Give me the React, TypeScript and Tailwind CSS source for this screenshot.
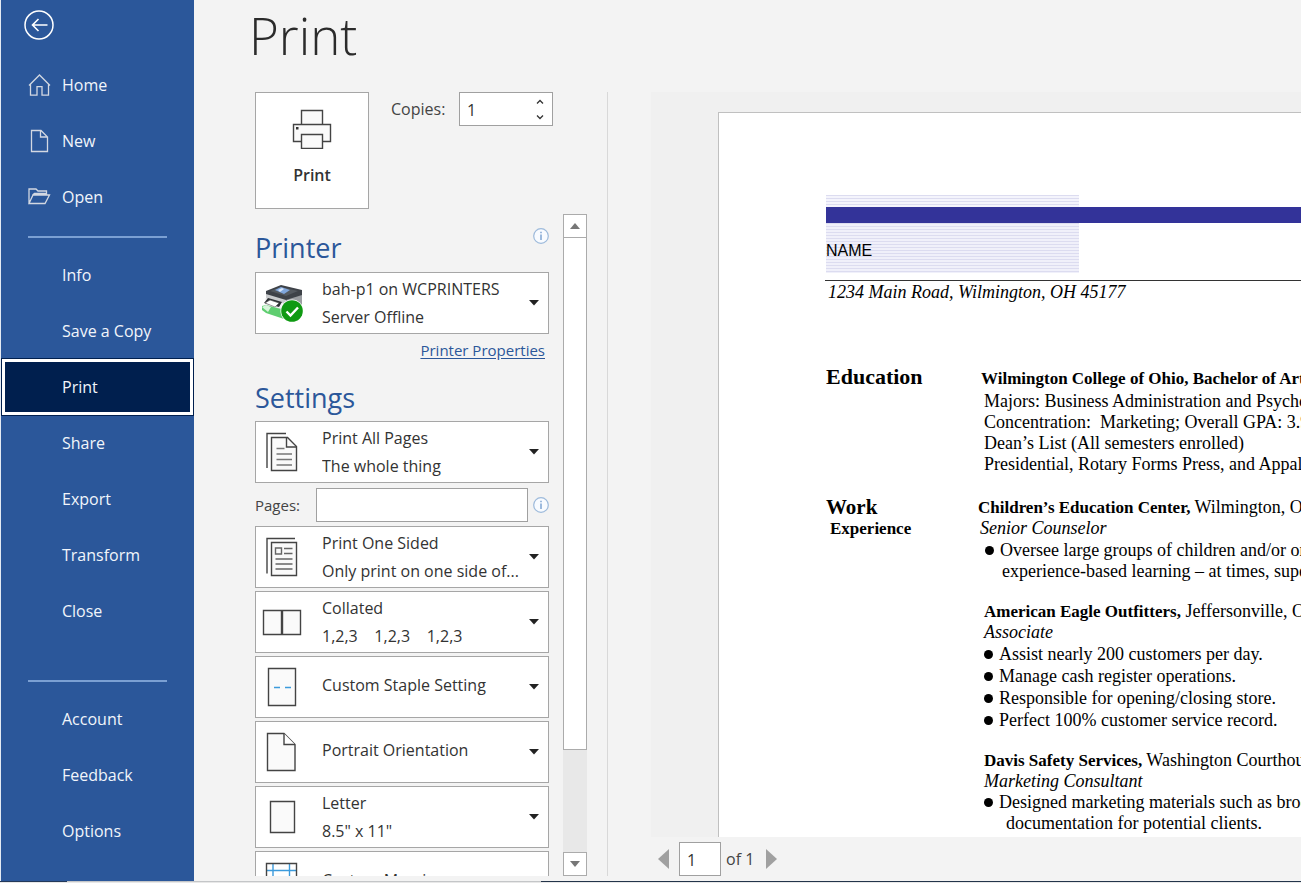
import type { ReactNode } from "react";

const uiFont = "font-['Open_Sans','Noto_Sans',sans-serif]";

/* ---------- icons ---------- */

function BackIcon() {
  return (
    <svg width="30" height="30" viewBox="0 0 30 30" fill="none" stroke="#fff" aria-hidden="true">
      <circle cx="15" cy="15" r="14" strokeWidth="1.5" />
      <path d="M23.5 15H8M14.500 9l-6 6 6 6" strokeWidth="1.600" />
    </svg>
  );
}

function HomeIcon() {
  return (
    <svg width="24" height="24" viewBox="0 0 24 24" fill="none" stroke="#d3d8e2" strokeWidth="1.300" aria-hidden="true">
      <path d="M2 12.500 12.500 2 23 12.500M3.500 11.200v11h6.500v-8.500h5v8.500h6.500v-11" />
    </svg>
  );
}

function NewIcon() {
  return (
    <svg width="24" height="24" viewBox="0 0 24 24" fill="none" stroke="#d3d8e2" strokeWidth="1.300" aria-hidden="true">
      <path d="M4.500 1.500H14l6.500 6.500v14.500h-16zM13.500 1.500v6.500h7" />
    </svg>
  );
}

function OpenIcon() {
  return (
    <svg width="24" height="24" viewBox="0 0 24 24" fill="none" stroke="#d3d8e2" strokeWidth="1.300" aria-hidden="true">
      <path d="M2 18.500V4h7l2 2h8.500v4M2 18.500 6 10h16.500l-4.500 8.500zM5.500 10l2-1.500h12" />
    </svg>
  );
}

function BigPrinterIcon() {
  return (
    <svg width="40" height="40" viewBox="0 0 40 40" fill="#fafafa" stroke="#444" strokeWidth="1.400" aria-hidden="true">
      <path d="M9.500 15V1.500h21V15" />
      <path d="M1.500 15.500h37v17h-37z" />
      <path d="M9.500 25.500h21v14h-21z" />
      <path d="M4 18h2.500v2.500H4z" fill="#333" stroke="none" />
    </svg>
  );
}

function DeviceIcon() {
  return (
    <svg width="44" height="40" viewBox="0 0 44 40" aria-hidden="true">
      <path d="M4 10 24 15v19L4 27z" fill="#c9cbcd" />
      <path d="M24 15l16-7v17l-16 9z" fill="#9a9da1" />
      <path d="M4 8 19 2l21 5v5l-16 5L4 11z" fill="#3e4248" />
      <path d="M8 8 19 4l17 4-12 5z" fill="#54595f" />
      <path d="M13 7l6-3 9 3-6 4z" fill="#7fa6dc" />
      <path d="M16 7l4-2 2 1-4 3z" fill="#d7e6fa" />
      <path d="M3 15l18 5v6L3 22z" fill="#f4f4f4" />
      <path d="M2 20l4-5 14 4-3 5z" fill="#2d3034" />
      <path d="M3 20l5-3 9 3-4 4z" fill="#fff" stroke="#555" strokeWidth=".6" />
      <path d="M0 23l4-1 18 5v9L4 30l-4-3z" fill="#5fce70" />
      <path d="M0 24l4-2 5 2-3 5z" fill="#d9f5dc" />
      <circle cx="30" cy="28" r="11.500" fill="#fff" />
      <circle cx="30" cy="28" r="10.800" fill="#0f9a12" />
      <path d="M24.500 28.500l4 4 7.500-8" fill="none" stroke="#fff" strokeWidth="2.400" />
    </svg>
  );
}

function PagesIcon() {
  return (
    <svg width="40" height="40" viewBox="0 0 40 40" fill="none" stroke="#444" strokeWidth="1.400" aria-hidden="true">
      <path d="M5 36V1.500h19" />
      <path d="M9.500 5.500h16l9 9v24h-25z" fill="#fafafa" />
      <path d="M24.500 5.500v9.500h10" />
      <path d="M14.500 16.500h8M14.500 22h15.500M14.500 27.500h15.500M14.500 33h15.500" stroke="#777" />
    </svg>
  );
}

function OneSidedIcon() {
  return (
    <svg width="40" height="40" viewBox="0 0 40 40" fill="none" stroke="#444" strokeWidth="1.400" aria-hidden="true">
      <path d="M5 36.500V1.500h28" />
      <path d="M9.500 5.500h25v33h-25z" fill="#fafafa" />
      <path d="M13.500 11h6v6h-6zM22 11.500h8.500M22 16.500h8.500M13.500 22h17M13.500 27h17M13.500 32h17" stroke="#666" />
    </svg>
  );
}

function CollatedIcon() {
  return (
    <svg width="40" height="40" viewBox="0 0 40 40" fill="#fafafa" stroke="#444" strokeWidth="1.400" aria-hidden="true">
      <path d="M1.500 8.500h18v24h-18zM20.500 8.500h18v24h-18z" />
    </svg>
  );
}

function StapleIcon() {
  return (
    <svg width="40" height="40" viewBox="0 0 40 40" fill="#fafafa" stroke="#444" strokeWidth="1.400" aria-hidden="true">
      <path d="M6.500 1.500h27v37h-27z" />
      <path d="M12 20.500h6M23 20.500h6" stroke="#3c9bdc" strokeWidth="1.500" />
    </svg>
  );
}

function PortraitIcon() {
  return (
    <svg width="40" height="40" viewBox="0 0 40 40" fill="#fafafa" stroke="#444" strokeWidth="1.400" aria-hidden="true">
      <path d="M5.500 1.500H22l11 11v26H5.500z" />
      <path d="M22 1.500v11h11" fill="#fff" />
    </svg>
  );
}

function LetterIcon() {
  return (
    <svg width="40" height="40" viewBox="0 0 40 40" fill="#fafafa" stroke="#444" strokeWidth="1.400" aria-hidden="true">
      <path d="M8.500 4.500h24v31h-24z" />
    </svg>
  );
}

function MarginsIcon() {
  return (
    <svg width="40" height="40" viewBox="0 0 40 40" fill="#fafafa" stroke="#444" strokeWidth="1.400" aria-hidden="true">
      <path d="M11 2v36M27.500 2v36M5 8.500h29M5 32h29" stroke="#3c9bdc" />
      <path d="M4.500 1.500h30v37h-30z" fill="none" />
    </svg>
  );
}

function CaretDown() {
  return (
    <svg width="10" height="6" viewBox="0 0 10 6" aria-hidden="true">
      <path d="M0 0h10L5 5.500z" fill="#222" />
    </svg>
  );
}

function InfoButton({ label }: { label: string }) {
  return (
    <button type="button" aria-label={label} className="flex size-4 items-center justify-center">
      <svg width="16" height="16" viewBox="0 0 16 16" fill="none" aria-hidden="true">
        <circle cx="8" cy="8" r="7.300" stroke="#9dbadb" strokeWidth="1.200" fill="#f8fbff" />
        <path d="M8 6.500v5.500M8 3.800v1.400" stroke="#6290c8" strokeWidth="1.200" />
      </svg>
    </button>
  );
}

/* ---------- sidebar ---------- */

function NavItem({ label, icon, active }: { label: string; icon?: ReactNode; active?: boolean }) {
  return (
    <li>
      <a
        href={"#" + label.toLowerCase().replace(/ /g, "-")}
        aria-current={active ? "page" : undefined}
        className={
          active
            ? "mx-px flex h-14 items-center border-3 border-white bg-[#001f4e] pl-[57px] outline-1 outline-[#001f4e]"
            : "flex h-14 items-center pl-[26px]"
        }
      >
        {!active && <span className="w-[35px] shrink-0">{icon}</span>}
        {label}
      </a>
    </li>
  );
}

function Sidebar() {
  return (
    <nav
      aria-label="File"
      className="flex w-[194px] shrink-0 flex-col border-l border-[#e4eaf3] bg-[#2b579a] text-base text-[#f1f5fb]"
    >
      <div className="flex h-[57px] items-start pt-[10px] pl-[23px]">
        <button type="button" aria-label="Back">
          <BackIcon />
        </button>
      </div>
      <ul>
        <NavItem label="Home" icon={<HomeIcon />} />
        <NavItem label="New" icon={<NewIcon />} />
        <NavItem label="Open" icon={<OpenIcon />} />
      </ul>
      <hr className="mx-[27px] mt-[11px] mb-[9px] border-t-2 border-[#7ba0d3]" />
      <ul>
        <NavItem label="Info" />
        <NavItem label="Save a Copy" />
        <NavItem label="Print" active />
        <NavItem label="Share" />
        <NavItem label="Export" />
        <NavItem label="Transform" />
        <NavItem label="Close" />
      </ul>
      <hr className="mx-[27px] mt-[41px] mb-[9px] border-t-2 border-[#7ba0d3]" />
      <ul>
        <NavItem label="Account" />
        <NavItem label="Feedback" />
        <NavItem label="Options" />
      </ul>
    </nav>
  );
}

/* ---------- settings column ---------- */

function Picker({ icon, title, detail }: { icon: ReactNode; title: string; detail?: string }) {
  return (
    <button
      type="button"
      aria-haspopup="listbox"
      className="flex h-[62px] w-full shrink-0 items-center border border-[#a6a6a6] bg-white pr-[9px] pl-[6px] text-left text-base leading-7 text-[#333]"
    >
      <span className="flex w-[60px] shrink-0">{icon}</span>
      <span className={detail ? "flex min-w-0 flex-1 flex-col" : "flex min-w-0 flex-1 flex-col pb-1"}>
        <span>{title}</span>
        {detail && <span className="truncate whitespace-pre">{detail}</span>}
      </span>
      <CaretDown />
    </button>
  );
}

function ScrollBar() {
  return (
    <div className="flex w-6 shrink-0 flex-col bg-[#e8e8e8]">
      <button
        type="button"
        aria-label="Scroll up"
        className="flex h-6 items-center justify-center border border-[#ababab] bg-white"
      >
        <svg width="10" height="6" viewBox="0 0 10 6" aria-hidden="true">
          <path d="M0 6h10L5 0z" fill="#777" />
        </svg>
      </button>
      <div className="-mt-px flex-[5] border border-[#ababab] bg-white" />
      <div className="flex-1" />
      <button
        type="button"
        aria-label="Scroll down"
        className="flex h-6 items-center justify-center border border-[#ababab] bg-white"
      >
        <svg width="10" height="6" viewBox="0 0 10 6" aria-hidden="true">
          <path d="M0 0h10L5 6z" fill="#777" />
        </svg>
      </button>
    </div>
  );
}

function SettingsColumn() {
  return (
    <section className="mb-[5px] flex w-[353px] shrink-0 flex-col border-r border-[#d8d8d8]">
      <div className="flex items-start">
        <button
          type="button"
          className="flex h-[117px] w-[114px] flex-col items-center border border-[#a6a6a6] bg-white pt-4 text-base font-semibold text-[#333]"
        >
          <BigPrinterIcon />
          <span className="mt-[14px]">Print</span>
        </button>
        <label htmlFor="copies" className="ml-[22px] w-[68px] text-base leading-[34px] text-[#444]">
          Copies:
        </label>
        <div className="flex h-[34px] w-[94px] border border-[#a0a0a0] bg-white">
          <input
            id="copies"
            type="text"
            inputMode="numeric"
            defaultValue="1"
            className="min-w-0 flex-1 pt-[2px] pl-[7px] text-base text-[#333] outline-none"
          />
          <div className="flex w-6 flex-col">
            <button type="button" aria-label="More copies" className="flex flex-1 items-center justify-center">
              <svg width="8" height="5" viewBox="0 0 8 5" fill="none" stroke="#333" strokeWidth="1.300" aria-hidden="true">
                <path d="M1 4.500l3-3 3 3" />
              </svg>
            </button>
            <button type="button" aria-label="Fewer copies" className="flex flex-1 items-center justify-center">
              <svg width="8" height="5" viewBox="0 0 8 5" fill="none" stroke="#333" strokeWidth="1.300" aria-hidden="true">
                <path d="M1 .5l3 3 3-3" />
              </svg>
            </button>
          </div>
        </div>
      </div>

      <div className="mt-[5px] flex min-h-0 flex-1">
        <div className="flex w-[294px] flex-col overflow-hidden">
          <div className="flex h-[58px] shrink-0 items-start justify-between">
            <h2 className="pt-4 text-[27px] leading-9 text-[#2b579a]">Printer</h2>
            <div className="pt-[14px]">
              <InfoButton label="Printer information" />
            </div>
          </div>
          <Picker icon={<DeviceIcon />} title="bah-p1 on WCPRINTERS" detail="Server Offline" />
          <a
            href="#printer-properties"
            className="mt-1 mr-1 self-end text-[15px] leading-6 text-[#2b579a] underline underline-offset-2"
          >
            Printer Properties
          </a>
          <h2 className="mt-[18px] mb-[5px] shrink-0 text-[27px] leading-9 text-[#2b579a]">Settings</h2>
          <Picker icon={<PagesIcon />} title="Print All Pages" detail="The whole thing" />
          <div className="mt-[5px] mb-1 flex h-[34px] shrink-0 items-center">
            <label htmlFor="pages" className="w-[61px] text-[15px] text-[#444]">
              Pages:
            </label>
            <input id="pages" type="text" className="h-[34px] min-w-0 flex-1 border border-[#a0a0a0] bg-white px-2 outline-none" />
            <div className="ml-[5px]">
              <InfoButton label="Page range information" />
            </div>
          </div>
          <div className="flex flex-col gap-[3px]">
            <Picker icon={<OneSidedIcon />} title="Print One Sided" detail="Only print on one side of..." />
            <Picker icon={<CollatedIcon />} title="Collated" detail="1,2,3    1,2,3    1,2,3" />
            <Picker icon={<StapleIcon />} title="Custom Staple Setting" />
            <Picker icon={<PortraitIcon />} title="Portrait Orientation" />
            <Picker icon={<LetterIcon />} title="Letter" detail={'8.5" x 11"'} />
            <Picker icon={<MarginsIcon />} title="Custom Margins" />
          </div>
        </div>
        <div className="ml-[14px] flex">
          <ScrollBar />
        </div>
      </div>
    </section>
  );
}

/* ---------- document preview ---------- */

function Bullet({ children }: { children: ReactNode }) {
  return (
    <li className="flex items-center gap-[6px]">
      <span className="size-[9px] shrink-0 rounded-full bg-black" />
      <span>{children}</span>
    </li>
  );
}

function Employer({ name, place }: { name: string; place: string }) {
  return (
    <p>
      <b className="text-[17px]">{name},</b> {place}
    </p>
  );
}

function ResumePage() {
  return (
    <article className="flex-1 overflow-hidden border-t border-l border-[#c0c0c0] bg-white pt-[82px] pl-[107px] font-['Liberation_Serif',serif] text-[18px] leading-[21px] whitespace-nowrap text-black">
      <header>
        <div className="h-3 w-[253px] bg-[repeating-linear-gradient(to_bottom,#dcdcf0_0px,#dcdcf0_1px,#f4f4fc_1px,#f4f4fc_3px)]" />
        <div className="h-4 bg-[#333399]" />
        <div className="flex h-[50px] w-[253px] items-center bg-[repeating-linear-gradient(to_bottom,#dcdcf0_0px,#dcdcf0_1px,#f0f0fa_1px,#f0f0fa_3px)] pt-[6px] font-['Liberation_Sans',sans-serif] text-base">
          NAME
        </div>
        <div className="mt-[7px] -ml-px border-t border-[#333] pt-px pb-px pl-[3px] text-[18px] italic">
          1234 Main Road, Wilmington, OH 45177
        </div>
      </header>

      <section className="mt-[64px] flex">
        <h3 className="w-[155px] shrink-0 text-[22px] leading-[18px] font-bold">Education</h3>
        <div>
          <p className="mb-[2px] text-[17px] font-bold">Wilmington College of Ohio, Bachelor of Arts</p>
          <div className="pl-[3px]">
            <p>Majors: Business Administration and Psychology</p>
            <p className="whitespace-pre">Concentration:  Marketing; Overall GPA: 3.9</p>
            <p>Dean’s List (All semesters enrolled)</p>
            <p>Presidential, Rotary Forms Press, and Appal</p>
          </div>
        </div>
      </section>

      <section className="mt-[22px] flex">
        <h3 className="w-[152px] shrink-0 text-[21px] font-bold">
          Work
          <span className="block pl-1 text-[17px]">Experience</span>
        </h3>
        <div>
          <Employer name="Children’s Education Center" place="Wilmington, Ohio" />
          <p className="pl-[2px] italic">Senior Counselor</p>
          <ul className="pt-px pl-[7px]">
            <Bullet>Oversee large groups of children and/or on</Bullet>
            <li className="pl-[17px]">experience-based learning – at times, super</li>
          </ul>
          <div className="pt-[19px] pl-[6px]">
            <Employer name="American Eagle Outfitters" place="Jeffersonville, Ohio" />
            <p className="italic">Associate</p>
            <ul className="leading-[22px]">
              <Bullet>Assist nearly 200 customers per day.</Bullet>
              <Bullet>Manage cash register operations.</Bullet>
              <Bullet>Responsible for opening/closing store.</Bullet>
              <Bullet>Perfect 100% customer service record.</Bullet>
            </ul>
          </div>
          <div className="pt-[19px] pl-[6px]">
            <Employer name="Davis Safety Services" place="Washington Courthouse" />
            <p className="italic">Marketing Consultant</p>
            <ul>
              <Bullet>Designed marketing materials such as broc</Bullet>
              <li className="pl-[22px]">documentation for potential clients.</li>
            </ul>
          </div>
        </div>
      </section>
    </article>
  );
}

function Preview() {
  return (
    <section aria-label="Preview" className="ml-[43px] flex min-w-0 flex-1 flex-col">
      <div className="flex min-h-0 flex-1 bg-[#f0f0f0] pt-5 pl-[67px]">
        <ResumePage />
      </div>
      <div className="flex h-11 shrink-0 items-center pl-[7px] text-base text-[#444]">
        <button type="button" aria-label="Previous page">
          <svg width="11" height="20" viewBox="0 0 11 20" aria-hidden="true">
            <path d="M11 0v20L0 10z" fill="#a0a0a0" />
          </svg>
        </button>
        <input
          type="text"
          aria-label="Current page"
          defaultValue="1"
          className="ml-[10px] h-[34px] w-[42px] border border-[#a0a0a0] bg-white pt-[2px] pl-[7px] text-[#333] outline-none"
        />
        <span className="ml-[5px]">of 1</span>
        <button type="button" aria-label="Next page" className="ml-3">
          <svg width="11" height="20" viewBox="0 0 11 20" aria-hidden="true">
            <path d="M0 0v20l11-10z" fill="#a0a0a0" />
          </svg>
        </button>
      </div>
    </section>
  );
}

export default function App() {
  return (
    <div className={`flex h-screen flex-col overflow-hidden bg-[#f3f3f3] ${uiFont}`}>
      <div className="flex min-h-0 flex-1">
        <Sidebar />
        <main className="flex min-w-0 flex-1 flex-col">
          <h1 className="h-[92px] shrink-0 pl-[55px] text-[51px] leading-[70px] font-light text-[#2b2b2b]">Print</h1>
          <div className="flex min-h-0 flex-1 pl-[61px]">
            <SettingsColumn />
            <Preview />
          </div>
        </main>
      </div>
      <div className="flex h-[2px] shrink-0 border-b border-[#e8e8e8]">
        <div className="w-[67px] bg-[#23395a]" />
        <div className="w-[474px] bg-[#c4c6c8]" />
        <div className="flex-1 bg-[#23344a]" />
      </div>
    </div>
  );
}
